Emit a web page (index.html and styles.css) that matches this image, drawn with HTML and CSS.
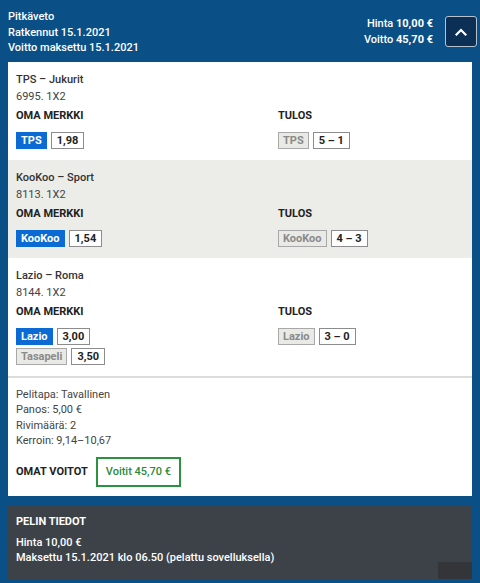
FILE: index.html
```html
<!DOCTYPE html>
<html lang="fi">
<head>
<meta charset="utf-8">
<title>Pitkäveto</title>
<link rel="stylesheet" href="styles.css">
</head>
<body>
<div class="page">
  <header class="head">
    <div class="head-info">
      <div>Pitkäveto</div>
      <div>Ratkennut 15.1.2021</div>
      <div>Voitto maksettu 15.1.2021</div>
    </div>
    <div class="head-right">
      <div class="head-sums">
        <div><span class="lt">Hinta</span> <b>10,00 €</b></div>
        <div><span class="lt">Voitto</span> <b>45,70 €</b></div>
      </div>
      <button class="toggle" type="button" aria-label="Sulje">
        <svg width="12" height="8" viewBox="0 0 12 8"><path d="M1.5 6.5 L6 2 L10.5 6.5" fill="none" stroke="#fff" stroke-width="2.2" stroke-linecap="square"/></svg>
      </button>
    </div>
  </header>

  <section class="panel">
    <div class="event">
      <div class="ev-title">TPS – Jukurit</div>
      <div class="ev-sub">6995. 1X2</div>
      <div class="ev-grid">
        <div>
          <div class="label">OMA MERKKI</div>
          <div class="chips">
            <div class="chip-row"><span class="chip pick">TPS</span><span class="chip val">1,98</span></div>
          </div>
        </div>
        <div>
          <div class="label">TULOS</div>
          <div class="chips">
            <div class="chip-row"><span class="chip res">TPS</span><span class="chip val">5 – 1</span></div>
          </div>
        </div>
      </div>
    </div>

    <div class="event alt">
      <div class="ev-title">KooKoo – Sport</div>
      <div class="ev-sub">8113. 1X2</div>
      <div class="ev-grid">
        <div>
          <div class="label">OMA MERKKI</div>
          <div class="chips">
            <div class="chip-row"><span class="chip pick">KooKoo</span><span class="chip val">1,54</span></div>
          </div>
        </div>
        <div>
          <div class="label">TULOS</div>
          <div class="chips">
            <div class="chip-row"><span class="chip res">KooKoo</span><span class="chip val">4 – 3</span></div>
          </div>
        </div>
      </div>
    </div>

    <div class="event last">
      <div class="ev-title">Lazio – Roma</div>
      <div class="ev-sub">8144. 1X2</div>
      <div class="ev-grid">
        <div>
          <div class="label">OMA MERKKI</div>
          <div class="chips">
            <div class="chip-row"><span class="chip pick">Lazio</span><span class="chip val">3,00</span></div>
            <div class="chip-row"><span class="chip res">Tasapeli</span><span class="chip val">3,50</span></div>
          </div>
        </div>
        <div>
          <div class="label">TULOS</div>
          <div class="chips">
            <div class="chip-row"><span class="chip res">Lazio</span><span class="chip val">3 – 0</span></div>
          </div>
        </div>
      </div>
    </div>

    <div class="summary">
      <div class="sum-lines">
        <div>Pelitapa: Tavallinen</div>
        <div>Panos: 5,00 €</div>
        <div>Rivimäärä: 2</div>
        <div>Kerroin: 9,14–10,67</div>
      </div>
      <div class="wins">
        <span class="label">OMAT VOITOT</span>
        <span class="win-box">Voitit 45,70 €</span>
      </div>
    </div>
  </section>

  <section class="details">
    <div class="det-title">PELIN TIEDOT</div>
    <div class="det-lines">
      <div>Hinta 10,00 €</div>
      <div>Maksettu 15.1.2021 klo 06.50 (pelattu sovelluksella)</div>
    </div>
    <span class="corner"></span>
  </section>
</div>
</body>
</html>
```

FILE: styles.css
```css
* { box-sizing: border-box; }
html, body { margin: 0; padding: 0; }
body {
  background: #0b4f87;
  font-family: Roboto, "Liberation Sans", sans-serif;
  font-size: 11px;
  color: #333;
}
.page { width: 480px; height: 583px; padding: 0 0 3px; }

.head {
  display: flex;
  justify-content: space-between;
  height: 62px;
  padding: 9px 3px 0 8px;
  color: #fff;
  font-weight: 500;
}
.head-info { line-height: 15.5px; }
.head-right {
  display: flex;
  align-items: center;
  align-self: center;
  margin-top: -8px;
}
.head-sums { text-align: right; line-height: 16px; }
.head-sums b { font-weight: 700; }
.head-sums .lt { font-weight: 500; }
.toggle {
  width: 32px;
  height: 31px;
  margin-left: 12px;
  background: #0b2f55;
  border: 1px solid #b9c2cc;
  border-radius: 3px;
  display: flex;
  align-items: center;
  justify-content: center;
  padding: 0;
}

.panel {
  margin: 0 8px;
  background: #fff;
}
.event { padding: 9px 8px 11px; }
.event.alt { background: #ecece9; }
.event.last { border-bottom: 2px solid #dcdcd9; }
.ev-title { line-height: 17px; font-weight: 500; color: #333; }
.ev-sub { line-height: 17px; color: #444; }
.ev-grid {
  display: grid;
  grid-template-columns: 262px 1fr;
  margin-top: 2px;
}
.label {
  line-height: 17px;
  font-weight: 700;
  color: #222;
}
.chips { margin-top: 8px; display: flex; flex-direction: column; gap: 3px; }
.chip-row { display: flex; gap: 4px; }
.chip {
  height: 17px;
  line-height: 15px;
  padding: 0 4px;
  border: 1px solid #999;
  font-weight: 700;
  font-size: 11px;
}
.chip.pick { background: #0b6ad4; border-color: #0b6ad4; color: #fff; }
.chip.val { background: #fff; color: #222; border-color: #8c8c8c; padding: 0 5px; }
.chip.res { background: #e9e9e6; color: #8a8a8a; border-color: #a8a8a8; }

.summary { padding: 9px 8px 9px; }
.sum-lines { line-height: 15.4px; color: #444; }
.wins {
  display: flex;
  align-items: center;
  gap: 8px;
  margin-top: 8px;
}
.win-box {
  height: 30px;
  line-height: 26px;
  padding: 0 8px;
  border: 2px solid #2a9340;
  color: #2a8a3a;
  font-weight: 500;
}

.details {
  position: relative;
  margin: 9px 8px 0;
  height: 74px;
  background: #3d4249;
  color: #fff;
  padding: 9px 8px 0;
  font-weight: 500;
}
.det-title { line-height: 16px; font-weight: 700; }
.det-lines { margin-top: 5px; line-height: 15.5px; }
.corner {
  position: absolute;
  right: 0;
  bottom: 0;
  width: 34px;
  height: 17px;
  background: #333539;
}
```
